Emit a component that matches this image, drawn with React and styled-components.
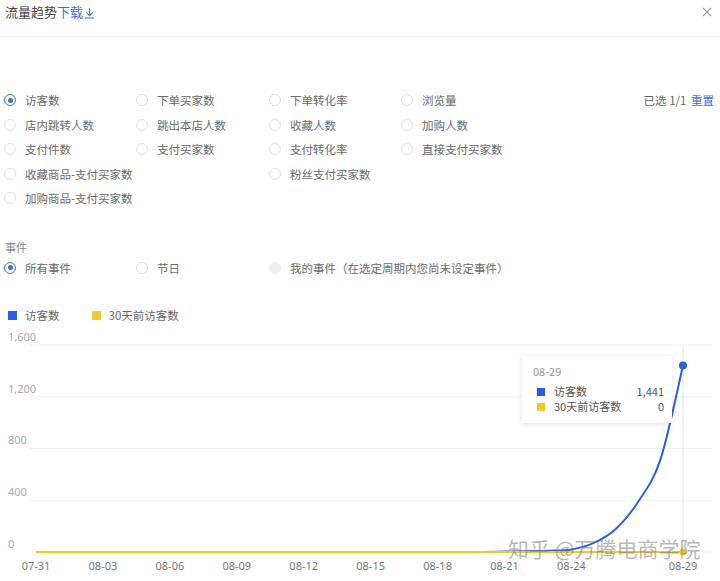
import React from 'react';
import styled, { createGlobalStyle } from 'styled-components';

const GlobalStyle = createGlobalStyle`
    body {
        margin: 0;
        background: #fff;
        font-family: "Noto Sans CJK SC", "Noto Sans", sans-serif;
        color: #666;
    }
`;

const BLUE = '#2f5fd8';
const YELLOW = '#f2c92a';
const LINK = '#3a72d6';

const metrics = [
    ['访客数', '下单买家数', '下单转化率', '浏览量'],
    ['店内跳转人数', '跳出本店人数', '收藏人数', '加购人数'],
    ['支付件数', '支付买家数', '支付转化率', '直接支付买家数'],
    ['收藏商品-支付买家数', null, '粉丝支付买家数', null],
    ['加购商品-支付买家数', null, null, null],
];

const dates = ['07-31', '08-03', '08-06', '08-09', '08-12', '08-15', '08-18', '08-21', '08-24'];

const visitors = [
    0, 0, 0, 0, 0, 0, 0, 0, 0, 0, 0, 0, 0, 0, 0, 0, 0, 0, 0, 0, 0,
    3, 6, 10, 20, 70, 180, 390, 720, 1441,
];

const TOP = 328;
const X0 = 36;
const DX = 22.31;
const Y0 = 552 - TOP;
const yOf = (v) => Y0 - (v / 1600) * 207;
const xOf = (i) => X0 + i * DX;

function smoothPath(values) {
    const pts = values.map((v, i) => [xOf(i), yOf(v)]);
    let d = `M${pts[0][0]},${pts[0][1]}`;
    for (let i = 0; i < pts.length - 1; i++) {
        const p0 = pts[i - 1] || pts[i];
        const p1 = pts[i];
        const p2 = pts[i + 1];
        const p3 = pts[i + 2] || p2;
        const c1x = p1[0] + (p2[0] - p0[0]) / 6;
        let c1y = p1[1] + (p2[1] - p0[1]) / 6;
        const c2x = p2[0] - (p3[0] - p1[0]) / 6;
        let c2y = p2[1] - (p3[1] - p1[1]) / 6;
        c1y = Math.min(c1y, Y0);
        c2y = Math.min(c2y, Y0);
        d += ` C${c1x},${c1y} ${c2x},${c2y} ${p2[0]},${p2[1]}`;
    }
    return d;
}

export default function App() {
    return (
        <Page>
            <GlobalStyle />
            <Header>
                <Title>
                    流量趋势
                    <Download>
                        下载
                        <svg width="11" height="12" viewBox="0 0 11 12">
                            <path d="M5.5 1v7.5M2.2 5.4l3.3 3.3 3.3-3.3M1 11h9" stroke={LINK} strokeWidth="1.1" fill="none" />
                        </svg>
                    </Download>
                </Title>
                <Close>
                    <svg width="10" height="10" viewBox="0 0 10 10">
                        <path d="M1 1l8 8M9 1l-8 8" stroke="#999" strokeWidth="1.2" />
                    </svg>
                </Close>
            </Header>

            <OptionGrid>
                {metrics.map((row, r) =>
                    row.map((label, c) => {
                        if (c === 3 && r === 0) {
                            return (
                                <LastCell key={`${r}-${c}`}>
                                    <Option>
                                        <Radio />
                                        {label}
                                    </Option>
                                    <Selected>
                                        已选 1/1 <Link>重置</Link>
                                    </Selected>
                                </LastCell>
                            );
                        }
                        return label ? (
                            <Option key={`${r}-${c}`}>
                                <Radio checked={r === 0 && c === 0} />
                                {label}
                            </Option>
                        ) : (
                            <span key={`${r}-${c}`} />
                        );
                    })
                )}
            </OptionGrid>

            <SectionLabel>事件</SectionLabel>
            <EventRow>
                <Option>
                    <Radio checked />
                    所有事件
                </Option>
                <Option>
                    <Radio />
                    节日
                </Option>
                <Option>
                    <Radio disabled />
                    我的事件（在选定周期内您尚未设定事件）
                </Option>
            </EventRow>

            <Legend>
                <LegendItem>
                    <Swatch color={BLUE} />
                    访客数
                </LegendItem>
                <LegendItem>
                    <Swatch color={YELLOW} />
                    30天前访客数
                </LegendItem>
            </Legend>

            <ChartWrap>
                <svg width="720" height="253" viewBox="0 0 720 253">
                    {[1600, 1200, 800, 400, 0].map((v) => (
                        <g key={v}>
                            <line x1="30" x2="712" y1={yOf(v)} y2={yOf(v)} stroke="#f1f1f1" />
                            <text x="8" y={yOf(v) - 7} dominantBaseline="middle" fontSize="11" fill="#aaa">
                                {v.toLocaleString('en-US')}
                            </text>
                        </g>
                    ))}
                    <line x1={xOf(29)} x2={xOf(29)} y1="17" y2={Y0} stroke="#e6e6e6" />
                    {dates.map((d, i) => (
                        <text key={d} x={xOf(i * 3)} y="239" textAnchor="middle" dominantBaseline="middle" fontSize="11" fill="#777">
                            {d}
                        </text>
                    ))}
                    <text x={xOf(29)} y="239" textAnchor="middle" dominantBaseline="middle" fontSize="11" fill="#777">
                        08-29
                    </text>
                    <path d={smoothPath(visitors)} stroke={BLUE} strokeWidth="2" fill="none" />
                    <line x1={xOf(0)} x2={xOf(29)} y1={Y0} y2={Y0} stroke={YELLOW} strokeWidth="2" />
                    <circle cx={xOf(29)} cy={yOf(1441)} r="4" fill={BLUE} />
                    <circle cx={xOf(29)} cy={Y0} r="3.5" fill={YELLOW} />
                </svg>

                <Tooltip>
                    <TipDate>08-29</TipDate>
                    <TipRow>
                        <TipSwatch color={BLUE} />
                        <span>访客数</span>
                        <TipValue>1,441</TipValue>
                    </TipRow>
                    <TipRow>
                        <TipSwatch color={YELLOW} />
                        <span>30天前访客数</span>
                        <TipValue>0</TipValue>
                    </TipRow>
                </Tooltip>

                <Watermark>知乎 @万腾电商学院</Watermark>
            </ChartWrap>
        </Page>
    );
}

const Page = styled.div`
    width: 720px;
    height: 581px;
    overflow: hidden;
    font-size: 11.5px;
`;

const Header = styled.header`
    height: 37px;
    box-sizing: border-box;
    padding: 4px 8px 0 5px;
    display: flex;
    justify-content: space-between;
    align-items: flex-start;
    border-bottom: 1px solid #ececec;
`;

const Title = styled.div`
    display: flex;
    align-items: center;
    font-size: 13px;
    line-height: 16px;
    color: #444;
`;

const Download = styled.span`
    display: inline-flex;
    align-items: center;
    color: ${LINK};
    gap: 1px;
    svg {
        margin-top: 1px;
    }
`;

const Close = styled.span`
    display: flex;
    padding-top: 3px;
`;

const OptionGrid = styled.div`
    margin-top: 51px;
    padding-left: 4px;
    display: grid;
    grid-template-columns: 132px 133px 132px 1fr;
    grid-auto-rows: 24.5px;
`;

const Option = styled.label`
    display: flex;
    align-items: center;
    gap: 9px;
    color: #6a6a6a;
    white-space: nowrap;
`;

const Radio = styled.span`
    box-sizing: border-box;
    width: 12px;
    height: 12px;
    border-radius: 50%;
    border: 1px solid ${(p) => (p.checked ? LINK : p.disabled ? '#eee' : '#e0e0e0')};
    background: ${(p) => (p.disabled ? '#eeeeee' : '#fff')};
    display: flex;
    align-items: center;
    justify-content: center;
    flex-shrink: 0;
    &::after {
        content: '';
        display: ${(p) => (p.checked ? 'block' : 'none')};
        width: 5px;
        height: 5px;
        border-radius: 50%;
        background: ${LINK};
    }
`;

const LastCell = styled.div`
    display: flex;
    justify-content: space-between;
    align-items: center;
    padding-right: 6px;
`;

const Selected = styled.span`
    color: #666;
`;

const Link = styled.span`
    color: ${LINK};
    margin-left: 2px;
`;

const SectionLabel = styled.div`
    margin-top: 28px;
    padding-left: 5px;
    line-height: 16px;
    font-size: 11px;
    color: #888;
`;

const EventRow = styled(OptionGrid)`
    margin-top: 1px;
    grid-template-columns: 132px 133px 1fr;
`;

const Legend = styled.div`
    margin-top: 27px;
    padding-left: 8px;
    display: flex;
    gap: 32px;
    line-height: 16px;
`;

const LegendItem = styled.span`
    display: flex;
    align-items: center;
    gap: 8px;
    color: #666;
`;

const Swatch = styled.span`
    width: 9px;
    height: 9px;
    background: ${(p) => p.color};
`;

const ChartWrap = styled.div`
    position: relative;
    margin-top: 5px;
    height: 253px;
    svg text {
        font-family: "Noto Sans", "Noto Sans CJK SC", sans-serif;
    }
`;

const Tooltip = styled.div`
    position: absolute;
    left: 522px;
    top: 28px;
    width: 150px;
    box-sizing: border-box;
    padding: 7px 8px 9px 11px;
    background: rgba(255, 255, 255, 0.96);
    box-shadow: 0 1px 5px rgba(0, 0, 0, 0.12);
    font-size: 11px;
    color: #555;
`;

const TipDate = styled.div`
    color: #999;
    line-height: 16px;
    margin-bottom: 5px;
`;

const TipRow = styled.div`
    display: grid;
    grid-template-columns: 21px 1fr auto;
    align-items: center;
    line-height: 15px;
`;

const TipSwatch = styled.span`
    width: 8px;
    height: 8px;
    margin-left: 4px;
    background: ${(p) => p.color};
`;

const TipValue = styled.span`
    text-align: right;
`;

const Watermark = styled.div`
    position: absolute;
    left: 508px;
    top: 210px;
    font-size: 21px;
    line-height: 21px;
    color: rgba(110, 110, 110, 0.5);
    white-space: nowrap;
    pointer-events: none;
`;
